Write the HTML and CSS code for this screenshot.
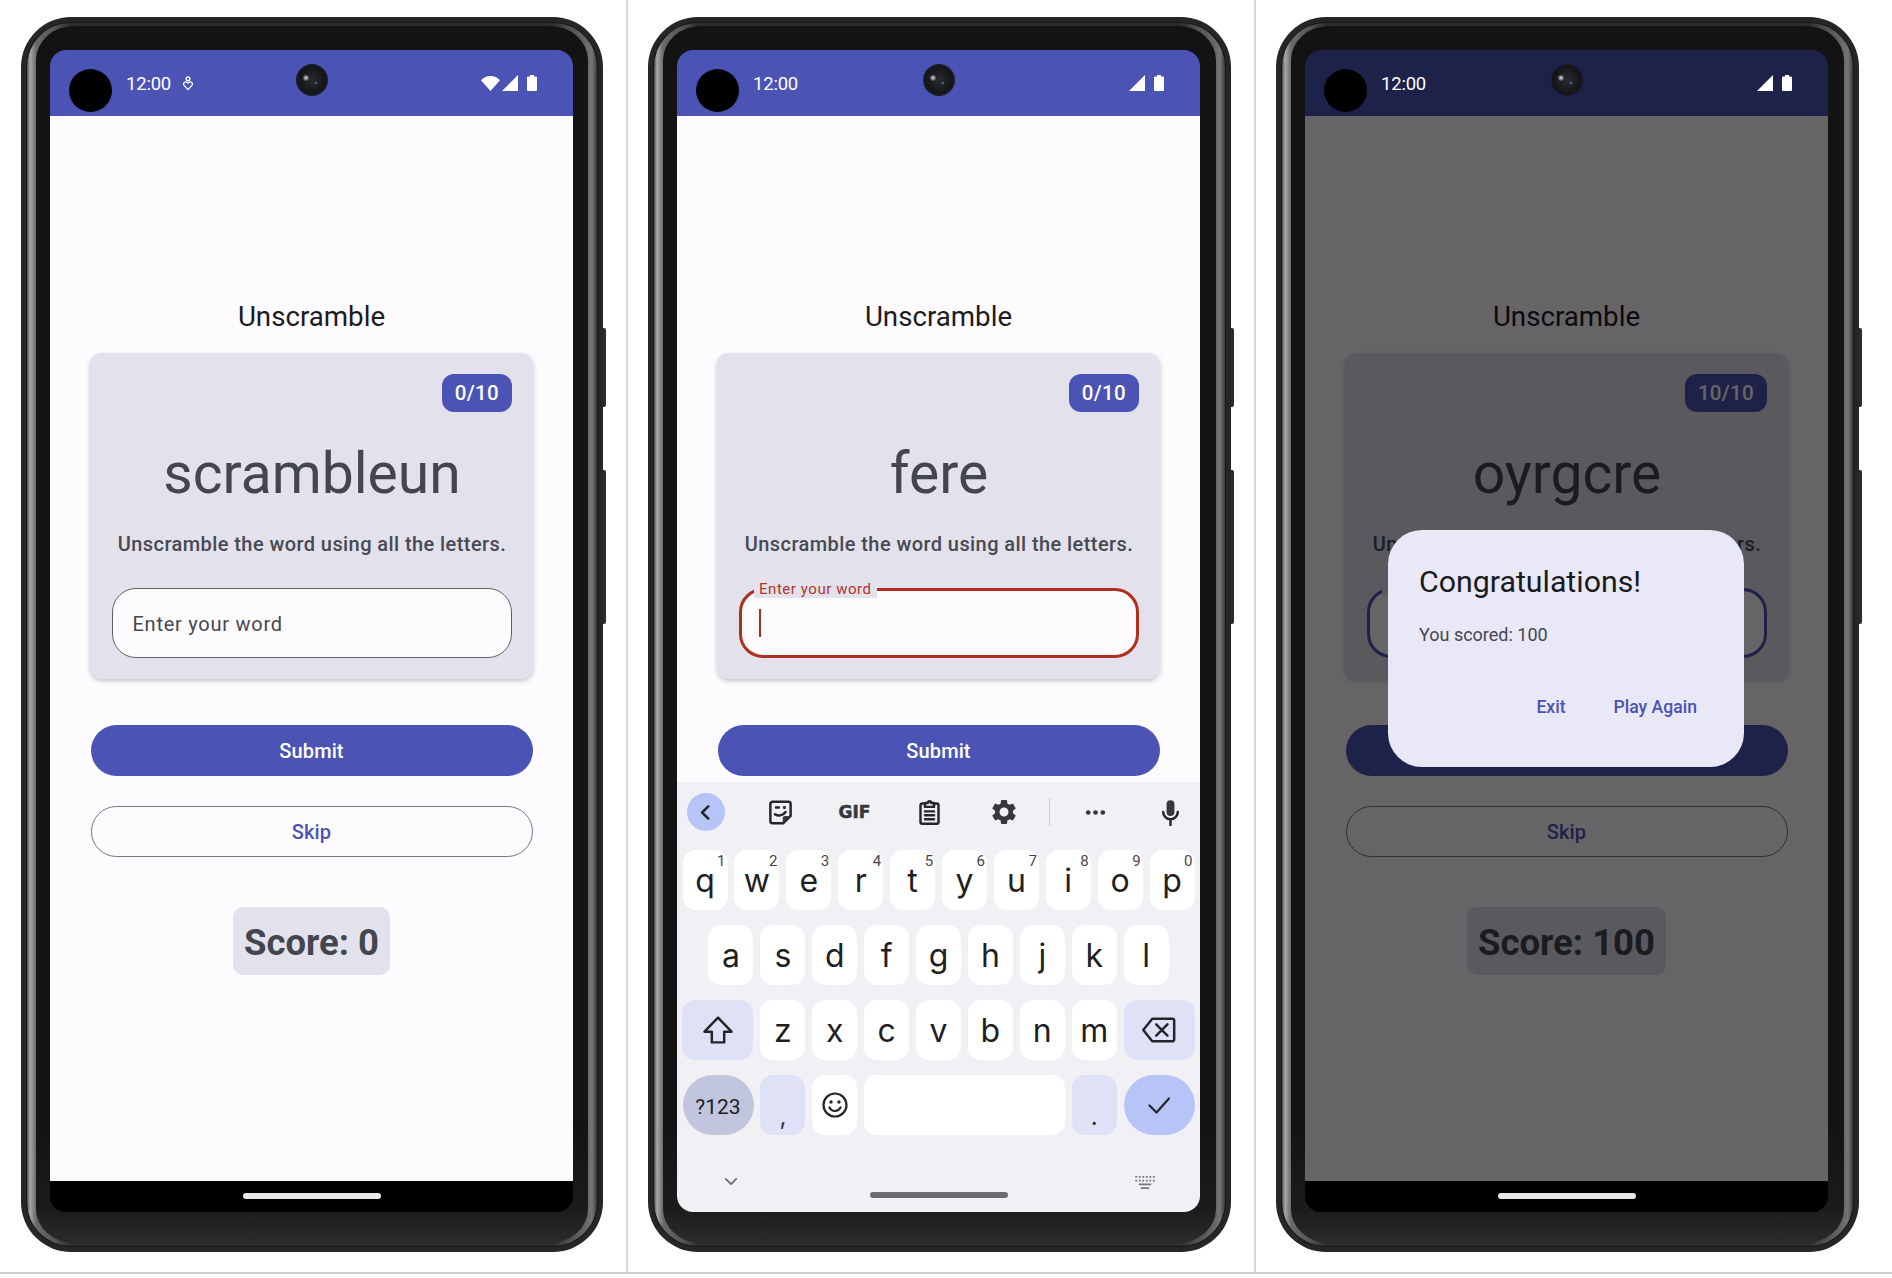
FILE: index.html
```html
<!DOCTYPE html>
<html lang="en">
<head>
<meta charset="utf-8">
<title>Unscramble</title>
<link rel="stylesheet" href="styles.css">
</head>
<body>
<svg class="defs" aria-hidden="true">
  <symbol id="i-wifi" viewBox="0 0 19 15"><path d="M9.5 15 0 4.2C2.4 1.6 5.8 0 9.5 0s7.1 1.6 9.5 4.2z"/></symbol>
  <symbol id="i-signal" viewBox="0 0 16 16"><path d="M16 0v16H0z"/></symbol>
  <symbol id="i-battery" viewBox="0 0 10 16"><path d="M3 0h4v1.500h2a1 1 0 0 1 1 1V15a1 1 0 0 1-1 1H1a1 1 0 0 1-1-1V2.500a1 1 0 0 1 1-1h2z"/></symbol>
</svg>

<main class="gallery">
  <section class="cell cell-first">
    <div class="phone">
      <span class="side-btn side-btn-power"></span><span class="side-btn side-btn-volume"></span>
      <div class="ring"><div class="bezel"><div class="screen">
        <header class="status">
          <span class="punch"></span>
          <span class="time">12:00</span>
          <svg class="notif" viewBox="0 0 12 16"><circle cx="6" cy="3" r="2"/><path d="M6 14.500 1.800 10C.5 8.500 1.600 6.300 3.500 6.300c1.100 0 1.900.6 2.500 1.300.6-.7 1.400-1.300 2.500-1.300 1.900 0 3 2.200 1.700 3.700z"/></svg>
          <span class="status-icons">
            <svg class="ic-wifi"><use href="#i-wifi"/></svg>
            <svg class="ic-signal"><use href="#i-signal"/></svg>
            <svg class="ic-battery"><use href="#i-battery"/></svg>
          </span>
          <span class="camera"></span>
        </header>
        <div class="content">
          <h1 class="title">Unscramble</h1>
          <div class="card">
            <span class="badge">0/10</span>
            <p class="word">scrambleun</p>
            <p class="hint">Unscramble the word using all the letters.</p>
            <div class="field"><span class="placeholder">Enter your word</span></div>
          </div>
          <button class="btn btn-fill">Submit</button>
          <button class="btn btn-line">Skip</button>
          <div class="score">Score: 0</div>
        </div>
        <footer class="nav"><span class="home"></span></footer>
      </div></div></div>
    </div>
  </section>

  <section class="cell">
    <div class="phone">
      <span class="side-btn side-btn-power"></span><span class="side-btn side-btn-volume"></span>
      <div class="ring"><div class="bezel"><div class="screen">
        <header class="status">
          <span class="punch"></span>
          <span class="time">12:00</span>
          <span class="status-icons">
            <svg class="ic-signal"><use href="#i-signal"/></svg>
            <svg class="ic-battery"><use href="#i-battery"/></svg>
          </span>
          <span class="camera"></span>
        </header>
        <div class="content">
          <h1 class="title">Unscramble</h1>
          <div class="card">
            <span class="badge">0/10</span>
            <p class="word">fere</p>
            <p class="hint">Unscramble the word using all the letters.</p>
            <div class="field field-error">
              <span class="float-label">Enter your word</span>
              <span class="caret"></span>
            </div>
          </div>
          <button class="btn btn-fill">Submit</button>
        </div>
        <div class="keyboard">
          <div class="kb-tools">
            <span class="tool tool-back"><svg viewBox="0 0 24 24" class="tool-svg"><path class="st" d="M14.500 6.500 9 12l5.500 5.500"/></svg></span>
            <span class="tool"><svg viewBox="0 0 24 24" class="tool-svg"><path class="st" d="M5 2.500h14a2 2 0 0 1 2 2V15l-6.500 6.500H5a2 2 0 0 1-2-2v-15a2 2 0 0 1 2-2z"/><path class="st" d="M7 13.500c3 2 7 1.500 9.500-2M8 7.500h2.500"/><circle cx="15.500" cy="7.500" r="1.500"/><path d="M14 21v-4a2 2 0 0 1 2-2h5z"/></svg></span>
            <span class="tool tool-gif">GIF</span>
            <span class="tool"><svg viewBox="0 0 24 24" class="tool-svg"><path class="st" d="M8 4H5.500a1.500 1.500 0 0 0-1.500 1.500v15A1.500 1.500 0 0 0 5.500 22h13a1.500 1.500 0 0 0 1.500-1.500v-15A1.500 1.500 0 0 0 18.500 4H16"/><path class="st" d="M8 3.500h2.500a1.500 1.500 0 0 1 3 0H16V7H8zM8 11h8M8 14.500h8M8 18h8"/></svg></span>
            <span class="tool"><svg viewBox="0 0 24 24" class="tool-svg tool-gear"><path d="M19.140 12.940c.04-.3.06-.61.06-.94 0-.32-.02-.64-.07-.94l2.030-1.580c.18-.14.23-.41.12-.61l-1.920-3.320c-.12-.22-.37-.29-.59-.22l-2.390.96c-.5-.38-1.030-.7-1.620-.94l-.36-2.540c-.04-.24-.24-.41-.48-.41h-3.840c-.24 0-.43.17-.47.41l-.36 2.540c-.59.24-1.130.57-1.620.94l-2.390-.96c-.22-.08-.47 0-.59.22L2.740 8.870c-.12.21-.08.47.12.61l2.030 1.580c-.05.3-.09.63-.09.94s.02.64.07.94l-2.030 1.580c-.18.14-.23.41-.12.61l1.920 3.320c.12.22.37.29.59.22l2.390-.96c.5.38 1.030.7 1.620.94l.36 2.540c.05.24.24.41.48.41h3.840c.24 0 .44-.17.47-.41l.36-2.540c.59-.24 1.130-.56 1.620-.94l2.390.96c.22.08.47 0 .59-.22l1.920-3.320c.12-.22.07-.47-.12-.61l-2.010-1.580zM12 15.600c-1.980 0-3.600-1.620-3.600-3.600s1.620-3.600 3.600-3.600 3.600 1.620 3.600 3.600-1.620 3.600-3.600 3.600z"/></svg></span>
            <span class="tool-divider"></span>
            <span class="tool"><svg viewBox="0 0 24 24" class="tool-svg"><circle cx="5.500" cy="12" r="2.100"/><circle cx="12" cy="12" r="2.100"/><circle cx="18.500" cy="12" r="2.100"/></svg></span>
            <span class="tool"><svg viewBox="0 0 24 24" class="tool-svg"><path d="M12 15a3.500 3.500 0 0 0 3.500-3.500v-7a3.500 3.500 0 0 0-7 0v7A3.500 3.500 0 0 0 12 15z"/><path class="st" d="M5.500 11.500a6.500 6.500 0 0 0 13 0M12 18v5"/></svg></span>
          </div>
          <div class="kb-row">
            <span class="key">q<sup class="num">1</sup></span><span class="key">w<sup class="num">2</sup></span><span class="key">e<sup class="num">3</sup></span><span class="key">r<sup class="num">4</sup></span><span class="key">t<sup class="num">5</sup></span><span class="key">y<sup class="num">6</sup></span><span class="key">u<sup class="num">7</sup></span><span class="key">i<sup class="num">8</sup></span><span class="key">o<sup class="num">9</sup></span><span class="key">p<sup class="num">0</sup></span>
          </div>
          <div class="kb-row kb-row-mid">
            <span class="key">a</span><span class="key">s</span><span class="key">d</span><span class="key">f</span><span class="key">g</span><span class="key">h</span><span class="key">j</span><span class="key">k</span><span class="key">l</span>
          </div>
          <div class="kb-row">
            <span class="key key-wide key-mod"><svg viewBox="0 0 32 32" class="key-svg"><path class="st" d="M16 5 4 17.500h6.500V27h11v-9.500H28z"/></svg></span>
            <span class="key">z</span><span class="key">x</span><span class="key">c</span><span class="key">v</span><span class="key">b</span><span class="key">n</span><span class="key">m</span>
            <span class="key key-wide key-mod"><svg viewBox="0 0 32 32" class="key-svg"><path class="st" d="M10 6h18a1.500 1.500 0 0 1 1.500 1.500v17A1.500 1.500 0 0 1 28 26H10L2 16z"/><path class="st" d="m13.500 11 10 10M23.500 11l-10 10"/></svg></span>
          </div>
          <div class="kb-row">
            <span class="key key-wide key-sym">?123</span>
            <span class="key key-mod key-punct">,</span>
            <span class="key"><svg viewBox="0 0 28 28" class="key-svg key-emoji"><circle class="st" cx="14" cy="14" r="11.500"/><circle cx="10" cy="11" r="1.700"/><circle cx="18" cy="11" r="1.700"/><path class="st" d="M8.500 16.500c1.200 2.500 3.200 3.500 5.500 3.500s4.300-1 5.500-3.500"/></svg></span>
            <span class="key key-space"></span>
            <span class="key key-mod key-punct">.</span>
            <span class="key key-wide key-enter"><svg viewBox="0 0 24 24" class="key-svg key-check"><path class="st" d="m2.500 12.500 7 7L22 5.500"/></svg></span>
          </div>
          <div class="kb-bottom">
            <svg viewBox="0 0 16 10" class="kb-chevron"><path class="st" d="m2 2 6 6 6-6"/></svg>
            <span class="kb-pill"></span>
            <svg viewBox="0 0 21 14" class="kb-board"><path d="M0 0h2v2H0zM3.800 0h2v2h-2zM7.600 0h2v2h-2zM11.400 0h2v2h-2zM15.200 0h2v2h-2zM19 0h2v2h-2zM0 4h2v2H0zM3.800 4h2v2h-2zM7.600 4h2v2h-2zM11.400 4h2v2h-2zM15.200 4h2v2h-2zM19 4h2v2h-2zM3.800 8h13.400v2H3.800zM6 12h9v2H6z"/></svg>
          </div>
        </div>
      </div></div></div>
    </div>
  </section>

  <section class="cell cell-last">
    <div class="phone">
      <span class="side-btn side-btn-power"></span><span class="side-btn side-btn-volume"></span>
      <div class="ring"><div class="bezel"><div class="screen">
        <header class="status status-dim">
          <span class="punch"></span>
          <span class="time">12:00</span>
          <span class="status-icons">
            <svg class="ic-signal"><use href="#i-signal"/></svg>
            <svg class="ic-battery"><use href="#i-battery"/></svg>
          </span>
          <span class="camera"></span>
        </header>
        <div class="content">
          <h1 class="title">Unscramble</h1>
          <div class="card">
            <span class="badge">10/10</span>
            <p class="word">oyrgcre</p>
            <p class="hint">Unscramble the word using all the letters.</p>
            <div class="field field-focus"><span class="float-gap"></span></div>
          </div>
          <button class="btn btn-fill">Submit</button>
          <button class="btn btn-line">Skip</button>
          <div class="score">Score: 100</div>
          <div class="scrim"></div>
          <div class="dialog">
            <h2 class="dialog-title">Congratulations!</h2>
            <p class="dialog-text">You scored: 100</p>
            <div class="dialog-actions">
              <span class="dialog-btn">Exit</span>
              <span class="dialog-btn">Play Again</span>
            </div>
          </div>
        </div>
        <footer class="nav"><span class="home"></span></footer>
      </div></div></div>
    </div>
  </section>
</main>
</body>
</html>
```

FILE: styles.css
```css
* { box-sizing: border-box; }
html, body { margin: 0; padding: 0; background: #fff; }
body { width: 1892px; height: 1278px; overflow: hidden; font-family: Roboto, "Liberation Sans", sans-serif; }
.defs { position: absolute; width: 0; height: 0; }

.gallery { display: grid; grid-template-columns: 628px 628px 636px; height: 1274px; border-bottom: 2px solid #cfcfcf; }
.cell { padding: 17px 0 0 20px; border-right: 2px solid #d6d8dd; }
.cell-first { padding-left: 21px; }
.cell-last { border-right: 0; }

/* device frame */
.phone { position: relative; width: 583px; height: 1235px; padding: 6px; border-radius: 50px; background: #262626; }
.cell-first .phone { width: 582px; }
.side-btn { position: absolute; right: -3px; width: 3px; background: #2b2b2b; border-radius: 0 2px 2px 0; }
.side-btn-power { top: 311px; height: 79px; }
.side-btn-volume { top: 453px; height: 154px; }
.ring { height: 100%; padding: 3px 9px; border-radius: 44px; box-shadow: 0 0 0 1px #171717;
  background: linear-gradient(90deg, #4a4a4a 0, #a8a8a8 3px, #8a8a8a 6px, #6a6a6a 9px, #555 28px, #2c2c2c 44px, #2c2c2c calc(100% - 44px), #505050 calc(100% - 28px), #6a6a6a calc(100% - 9px), #767676 calc(100% - 5px), #3a3a3a 100%); }
.bezel { height: 100%; padding: 24px 14px 31px; border-radius: 38px / 34px; background: linear-gradient(180deg, #131313 0, #131313 90%, #1b1b1b 97%, #2b2b2b 100%); }
.screen { position: relative; display: flex; flex-direction: column; width: 523px; height: 1162px; border-radius: 16px; overflow: hidden; background: #000; }

/* status bar */
.status { position: relative; flex: none; display: flex; align-items: center; height: 66px; background: #4b53b5; color: #fff; }
.status-dim { background: #1e2149; }
.punch { flex: none; width: 43px; height: 43px; margin: 15px 0 0 19px; border-radius: 50%; background: #000; }
.time { margin: 2px 0 0 14px; font-size: 18.5px; font-weight: 400; letter-spacing: -.2px; }
.notif { width: 12px; height: 15px; margin-left: 11px; fill: none; stroke: #fff; stroke-width: 1.4; }
.status-icons { display: flex; align-items: center; margin-left: auto; padding-right: 36px; }
.status-icons svg { fill: #fff; display: block; }
.ic-wifi { width: 19px; height: 15px; margin-right: 2px; }
.ic-signal { width: 16px; height: 16px; margin-right: 9px; }
.ic-battery { width: 10px; height: 16px; }
.camera { position: absolute; left: 247px; top: 15px; width: 30px; height: 30px; border-radius: 50%;
  background:
    radial-gradient(circle at 30% 43%, #dfe5ea 0, rgba(220,225,235,0) 13%),
    radial-gradient(circle at 63% 60%, #4d8fd0 0, rgba(70,130,200,0) 7%),
    radial-gradient(circle at 50% 50%, #2a2c30 0, #17181b 55%, #0a0a0a 100%);
  box-shadow: 0 0 0 1px #1a1a22; }

/* app content */
.content { position: relative; flex: 1; min-height: 0; overflow: hidden; padding-top: 183px; background: #fefbff; display: flex; flex-direction: column; align-items: center; }
.title { margin: 0 0 18px; font-size: 27.7px; line-height: 36px; font-weight: 400; color: #1b1b1f; }
.card { flex: none; align-self: stretch; display: flex; flex-direction: column; margin: 0 40px 46px; padding: 21px 21px 21px 22px; border-radius: 12px; background: #e2e1ec; box-shadow: 0 2px 5px rgba(0,0,0,.22); }
.badge { align-self: flex-end; padding: 0 13px; height: 38px; line-height: 38px; border-radius: 12px; background: #4b53b5; color: #fff; font-size: 20.5px; font-weight: 500; letter-spacing: .3px; }
.word { margin: 30px 0 0; font-size: 57px; line-height: 64px; text-align: center; color: #44464f; }
.hint { margin: 24px -10px 30px; font-size: 20px; line-height: 28px; font-weight: 500; letter-spacing: .42px; text-align: center; color: #484a53; white-space: nowrap; }
.field { position: relative; height: 70px; border-radius: 24px; border: 1.500px solid #5f6068; background: #fefbff; display: flex; align-items: center; padding-left: 19.500px; }
.placeholder { margin-top: 2px; font-size: 20px; letter-spacing: .75px; color: #46464f; }
.field-error, .field-focus { border: 3px solid #ae2f20; padding-left: 17px; }
.field-focus { border-color: #4b53b5; }
.float-label { position: absolute; left: 12px; top: -11px; padding: 0 5px; height: 18px; line-height: 18px; font-size: 15px; letter-spacing: .55px; color: #b3352a; background: #e2e1ec; }
.float-gap { position: absolute; left: 12px; top: -5px; width: 123px; height: 10px; background: #e2e1ec; }
.caret { width: 2px; height: 28px; background: #ae2f20; }

.btn { flex: none; width: 442px; height: 51px; border-radius: 26px; font: 500 20px Roboto, sans-serif; letter-spacing: .1px; }
.btn-fill { margin-bottom: 30px; border: 0; background: #4b53b5; color: #fff; }
.btn-line { margin-bottom: 50px; border: 1.500px solid #75767f; background: #fefbff; color: #4b53b5; }
.score { flex: none; height: 68px; line-height: 72px; padding: 0 11px; border-radius: 10px; background: #e2e1ec; color: #44464f; font-size: 36.5px; font-weight: 700; }

/* dialog */
.scrim { position: absolute; inset: 0; background: rgba(0,0,0,.6); }
.dialog { position: absolute; left: 83px; top: 414px; width: 356px; height: 237px; padding: 0 31px; border-radius: 34px; background: #e9e8f6; }
.dialog-title { margin: 32px 0 0; font-size: 30.3px; line-height: 40px; font-weight: 400; color: #1b1b1f; }
.dialog-text { margin: 21px 0 0; font-size: 18px; line-height: 24px; color: #46464f; }
.dialog-actions { display: flex; justify-content: flex-end; gap: 48px; margin: 48px 16px 0 0; }
.dialog-btn { font-size: 17.6px; line-height: 24px; font-weight: 500; color: #4b53b5; }

/* nav */
.nav { flex: none; height: 31px; background: #000; display: flex; justify-content: center; padding-top: 12px; }
.home { width: 138px; height: 6px; border-radius: 3px; background: #e8e8e8; }

/* keyboard */
.keyboard { flex: none; height: 430px; padding: 0 5.500px; background: #f1f0f5; display: flex; flex-direction: column; gap: 15px; }
.kb-tools { display: flex; align-items: center; gap: 36.500px; height: 38px; margin-top: 11px; margin-left: 4px; margin-bottom: 4px; }
.tool { flex: none; width: 38px; height: 38px; display: flex; align-items: center; justify-content: center; color: #37373c; }
.tool-back { border-radius: 50%; background: #b6c4f8; }
.tool-svg { width: 27px; height: 27px; fill: #37373c; }
.tool-gear { width: 30px; height: 30px; }
.tool-gif { font: 800 17px "DejaVu Sans", sans-serif; -webkit-text-stroke: .5px #37373c; }
.tool-divider { flex: none; width: 1px; height: 28px; margin: 0 -10px; background: #cfcfd3; }
.st { fill: none; stroke: #26262a; stroke-width: 2.200; stroke-linejoin: round; stroke-linecap: round; }
.kb-row { display: flex; justify-content: center; gap: 6.900px; height: 60px; }
.key { position: relative; flex: none; width: 45px; border-radius: 13px; background: #fff; display: flex; align-items: center; justify-content: center; font-family: Inter, Roboto, sans-serif; font-size: 32px; font-weight: 400; color: #1f1f23; }
.key-wide { width: 71px; }
.key-mod { background: #dfe1f7; }
.key-space { flex: 1; }
.key-sym { padding-top: 3px; border-radius: 30px; background: #c1c6de; font-size: 21px; font-family: Roboto, sans-serif; }
.key-enter { border-radius: 30px; background: #b6c4f8; }
.key-punct { align-items: flex-end; padding-bottom: 6px; font-size: 24px; line-height: 1; color: #333; }
.key-svg { width: 36px; height: 36px; }
.key-emoji { width: 28px; height: 28px; fill: #26262a; }
.key-check { width: 24px; height: 24px; }
.num { position: absolute; top: 3px; right: 2px; font-size: 15px; line-height: 16px; color: #46464a; font-family: Roboto, sans-serif; vertical-align: baseline; }
.kb-bottom { position: relative; flex: 1; }
.kb-chevron { position: absolute; left: 41px; top: 27px; width: 14px; height: 9px; }
.kb-chevron .st { stroke: #666; stroke-width: 1.800; }
.kb-board { position: absolute; left: 452px; top: 26px; width: 20px; height: 13px; fill: #77777c; }
.kb-pill { position: absolute; left: 187px; top: 42px; width: 138px; height: 6px; border-radius: 3px; background: #6b6b70; }
```
